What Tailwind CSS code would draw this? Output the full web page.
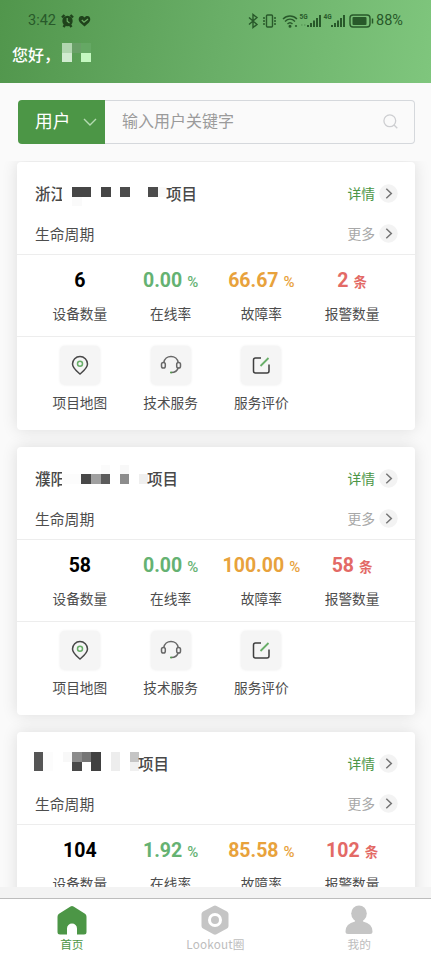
<!DOCTYPE html>
<html lang="zh-CN">
<head>
<meta charset="utf-8">
<title>首页</title>
<script src="https://cdn.jsdelivr.net/npm/@tailwindcss/browser@4"></script>
</head>
<body class="font-['Noto_Sans_CJK_SC',sans-serif]">
<div class="flex h-[959px] w-[431px] flex-col overflow-hidden bg-[#fafafa]">
  <header class="h-[83px] shrink-0 bg-linear-[100deg,#51964c,#69ae67_50%,#7fc67d]">
    <div class="flex h-[42px] items-center pl-[28px] font-[Roboto,sans-serif] text-[14.5px] text-[#28592a]">
      <span class="w-[33px]">3:42</span>
      <svg class="h-[14px] w-[32px]" viewBox="0 0 32 14">
        <circle cx="6.5" cy="7" r="5.200" fill="#1f431b"/><path d="M1 3.500 3.500 1M12 3.500 9.500 1M2.500 13l1.500-2M10.500 13 9 11" stroke="#1f431b" stroke-width="2.400"/><path d="M6.200 4v3.300L8.500 9" fill="none" stroke="#6aac63" stroke-width="1.200"/>
        <path d="M23.500 12.500 19 8.500C16.500 5.500 18 2 20.500 2c1.500 0 2.500.7 3 1.500.5-.8 1.500-1.500 3-1.500 2.500 0 4 3.500 1.500 6.500z" fill="#1f431b"/><path d="m20.800 6 2.200 2.200 4-3.200" fill="none" stroke="#6aac63" stroke-width="1.300"/>
      </svg>
      <svg class="ml-[155px] h-[16px] w-[127px]" viewBox="0 0 127 16" fill="none" stroke="#28592a" stroke-width="1.400">
        <path d="m1 4.500 8 7-4 3V1.500l4 3-8 7"/>
        <rect x="18.500" y="2" width="6" height="12" rx="1"/><path d="M16 4v2m0 1v2m0 1v2M27 4v2m0 1v2m0 1v2" stroke-width="1.500"/>
        <path d="M35 6c4-4 10-4 14 0M37 8.500c3-3 7-3 10 0M39.500 11c1.500-1.500 3.500-1.500 5 0"/><circle cx="42" cy="13.200" r=".8" fill="#28592a"/><circle cx="48" cy="13" r=".4"/>
        <g fill="#28592a" stroke="none" font-family="Roboto" font-weight="700" font-size="6.500"><text x="51.500" y="6">5G</text><text x="75.500" y="6">4G</text></g>
        <path d="M60 14v-2M63 14v-4M66 14V7.500M69 14V5M72 14V2M84 14v-2M87 14v-4M90 14V7.500M93 14V5M96 14V2" stroke-width="2"/><path d="M53 12h1.500M56 12h1.500" stroke="#5c9d5a"/>
        <rect x="102" y="2" width="20" height="12" rx="3"/><rect x="104.500" y="4" width="14" height="8" rx="1" fill="#28592a" stroke="none"/><path d="M124.500 5.500v5" stroke-width="1.500"/>
      </svg>
      <span class="ml-[1px]">88%</span>
    </div>
    <div class="flex h-[24px] items-center pl-[12px] text-[16px] font-medium text-white">
      <span class="w-[50px] shrink-0 whitespace-nowrap">您好，</span>
      <svg class="-mt-[3px] h-[19px] w-[29px]" viewBox="0 0 29 19" shape-rendering="crispEdges"><path fill="#b1d6af" d="M0 0h10v10H0z"/><path fill="#d1ebd0" d="M0 10h10v9H0z"/><path fill="#69a067" d="M10 0h9v10h-9z"/><path fill="#65a864" d="M19 0h10v10H19z"/><path fill="#c4f8c0" d="M19 10h10v9H19z"/></svg>
    </div>
  </header>

  <div class="h-[78px] shrink-0 pt-[17px] pl-[18px]">
    <div class="flex h-[43.500px] w-[397px]">
      <div class="flex w-[87px] items-center rounded-l-[4px] bg-[#4c9646] pb-[2px] pl-[17px] text-[17.700px] text-white">
        <span class="w-[48px]">用户</span>
        <svg class="mt-[3px] h-[9px] w-[14px]" viewBox="0 0 14 9" fill="none" stroke="#b5dbb2" stroke-width="1.400"><path d="m1 1 6 6 6-6"/></svg>
      </div>
      <div class="flex flex-1 items-center justify-between rounded-r-[4px] border border-l-0 border-[#d5d8dc] pr-[16px] pl-[17px] text-[16px] text-[#9b9b9b]">
        <span class="pb-[3px]">输入用户关键字</span>
        <svg class="mb-px h-[15px] w-[15px]" viewBox="0 0 15 15" fill="none" stroke="#cdced1" stroke-width="1.300"><circle cx="6.800" cy="6.800" r="5.900"/><path d="m11 11 3.300 3.300"/></svg>
      </div>
    </div>
  </div>

  <main id="list" class="flex h-[726px] shrink-0 flex-col gap-[17px] overflow-hidden pr-[16px] pl-[17px] pt-[0.500px]"></main>
  <div class="h-[11px] shrink-0 bg-[#f3f3f3]"></div>

  <nav class="grid flex-1 grid-cols-3 border-t border-[#bdbdbd] bg-white text-[11.700px] leading-[16px] text-[#bdbdbd]">
    <div class="flex flex-col items-center pt-[6px] text-[#4c9646]">
      <svg class="h-[31px] w-[30px]" viewBox="0 0 30 31"><path fill="#4c9646" d="M13.500 1.400q1.500-1 3 0L28 8.700q1.500 1 1.500 3V27q0 2.500-2.500 2.500H20v-6a5 5 0 0 0-10 0v6H3Q.5 29.500.5 27V11.700q0-2 1.500-3z"/></svg>
      <span>首页</span>
    </div>
    <div class="flex flex-col items-center pt-[6px]">
      <svg class="h-[31px] w-[30px]" viewBox="0 0 30 31"><path fill="#c5c5c5" d="M13.500 1q1.500-.8 3 0L27 6.600q1.500 1 1.500 2.500v12q0 1.500-1.500 2.500l-10.500 5.700q-1.500.8-3 0L3 23.600q-1.500-1-1.500-2.500v-12Q1.500 7.600 3 6.600z"/><circle cx="15" cy="15" r="5.500" fill="none" stroke="#fff" stroke-width="3"/></svg>
      <span class="tracking-[0.200px]">Lookout圈</span>
    </div>
    <div class="flex flex-col items-center pt-[6px]">
      <svg class="h-[31px] w-[30px]" viewBox="0 0 30 31" fill="#c5c5c5"><ellipse cx="15" cy="8.500" rx="7.800" ry="8"/><path d="M10.500 14h9l-.5 2.500q9.500 2 9.500 10 0 2.500-2.500 2.500H4q-2.500 0-2.500-2.500 0-8 9.500-10z"/></svg>
      <span>我的</span>
    </div>
  </nav>
</div>

<script>
const projects = [
  { prefix: '浙江', width: 105, count: '6', online: '0.00', fault: '66.67', alarms: '2',
    blocks: [[10,4,19,10,'#464646'],[38.500,4,10,10,'#464646'],[57.500,4,10,10,'#4c4c4c'],[86,4,10,10,'#4c4c4c'],[10,14,10,9,'#fafafa'],[95.500,4,9,10,'#f9f9f9']] },
  { prefix: '濮阳', width: 86, count: '58', online: '0.00', fault: '100.00', alarms: '58',
    blocks: [[19,6,10,10,'#484848'],[29,6,9.500,10,'#a0a0a0'],[38.500,6,9.500,10,'#5c5c5c'],[57.500,6,9.500,10,'#8c8c8c'],[77,6,9,10,'#efefef'],[57.500,-3.500,9.500,9.500,'#f8f8f8'],[38.500,-3.500,9.500,9.500,'#fbfbfb'],[0,6,19,10,'#fcfcfc']] },
  { prefix: '', width: 104, count: '104', online: '1.92', fault: '85.58', alarms: '102',
    blocks: [[-1.500,-1,9.500,19,'#555'],[8,-1,9.500,19,'#fcfcfc'],[28,-1,9.500,9.500,'#f8f8f8'],[37,-1,9.500,9.500,'#8b8b8b'],[37,8.500,9.500,9.500,'#484848'],[46.500,-1,9.500,9.500,'#757575'],[56,-1,9.500,19,'#404040'],[75.500,-1,9.500,19,'#ededed'],[94.500,-1,9.500,9.500,'#c5c5c5'],[94.500,8.500,9.500,9.500,'#f0f0f0']] }
];
const arrow = `<svg class="h-[19px] w-[19px]" viewBox="0 0 19 19"><circle cx="9.500" cy="9.500" r="9.200" fill="#f3f3f3"/><path d="m7.300 4.800 5 4.700-5 4.700" fill="none" stroke="#747474" stroke-width="1.500"/></svg>`;
const stat = (value, unit, label, color, unitStyle) => `
  <div class="flex flex-col items-center">
    <div class="flex h-[26px] items-baseline gap-[5px] font-[Roboto,'Noto_Sans_CJK_SC',sans-serif] text-[19.500px] leading-[26px] font-bold ${color}"><span>${value}</span>${unit ? `<span class="${unitStyle}">${unit}</span>` : ''}</div>
    <div class="mt-[9px] text-[13.700px] leading-[20px] text-[#4d4d4d]">${label}</div>
  </div>`;
const action = (icon, label) => `
  <div class="flex flex-col items-center">
    <div class="flex h-[39px] w-[40px] items-center justify-center rounded-[5px] bg-[#f5f5f5] shadow-[0_0_3px_rgba(0,0,0,0.08)]"><svg class="-mt-[2px] h-[24px] w-[24px]" viewBox="0 0 24 24" fill="none" stroke-width="1.500">${icon}</svg></div>
    <div class="mt-[7px] text-[13.700px] leading-[20px] text-[#4d4d4d]">${label}</div>
  </div>`;
const pin = `<path stroke="#484848" d="M12 21C8.500 18 4.500 15 4.500 11a7.500 7.500 0 0 1 15 0c0 4-4 7-7.500 10z"/><circle cx="12" cy="10.800" r="2.500" stroke="#68ae68"/>`;
const headset = `<g stroke="#686868"><path d="M4.800 9.500a7.300 7.300 0 0 1 14.400 0M19.300 14.500c-.8 3-3.300 5-7 5"/><rect x="2.500" y="9.500" width="3.800" height="5.500" rx="1.800"/><rect x="17.700" y="9.500" width="3.800" height="5.500" rx="1.800"/></g><circle cx="12" cy="19.500" r="1" fill="#4c9646"/>`;
const edit = `<path stroke="#3f3f3f" d="M12 5H6.500q-2 0-2 2v11q0 2 2 2h11.500q2 0 2-2v-6.500"/><path stroke="#68ae68" stroke-width="1.800" d="m11.500 13 8-8"/>`;
document.getElementById('list').innerHTML = projects.map(p => `
  <section class="h-[268px] shrink-0 rounded-[4px] bg-white pt-[12px] shadow-[0_0_16px_rgba(0,0,0,0.12)]">
    <div class="flex h-[40px] items-center pr-[17px] pl-[18px]">
      <div class="-mt-[2px] flex flex-1 items-center text-[15.500px] leading-[20px] font-medium text-[#484848]">
        ${p.prefix ? `<span class="w-[27px] overflow-hidden whitespace-nowrap">${p.prefix}</span>` : ''}
        <svg class="h-[20px] shrink-0 overflow-visible" style="width:${p.width}px" shape-rendering="crispEdges">${p.blocks.map(b => `<rect x="${b[0]}" y="${b[1]}" width="${b[2]}" height="${b[3]}" fill="${b[4]}"/>`).join('')}</svg>
        <span class="-ml-px">项目</span>
      </div>
      <span class="mr-[4px] text-[13.800px] text-[#4c9646]">详情</span>${arrow}
    </div>
    <div class="flex h-[41.500px] items-center border-b border-[#ededed] pr-[17px] pl-[18px]">
      <span class="flex-1 text-[14.800px] text-[#4d4d4d]">生命周期</span>
      <span class="mr-[4px] text-[13.800px] text-[#a8a8a8]">更多</span>${arrow}
    </div>
    <div class="grid h-[82px] grid-cols-4 border-b border-[#ededed] px-[17.500px] pt-[13px]">
      ${stat(p.count, '', '设备数量', 'text-black', '')}
      ${stat(p.online, '%', '在线率', 'text-[#65b272]', 'text-[15px] font-medium')}
      ${stat(p.fault, '%', '故障率', 'text-[#e8a23c]', 'text-[15px] font-medium')}
      ${stat(p.alarms, '条', '报警数量', 'text-[#e36a66]', 'text-[13.500px]')}
    </div>
    <div class="grid grid-cols-4 px-[17.500px] pt-[9px]">
      ${action(pin, '项目地图')}
      ${action(headset, '技术服务')}
      ${action(edit, '服务评价')}
    </div>
  </section>`).join('');
</script>
</body>
</html>
